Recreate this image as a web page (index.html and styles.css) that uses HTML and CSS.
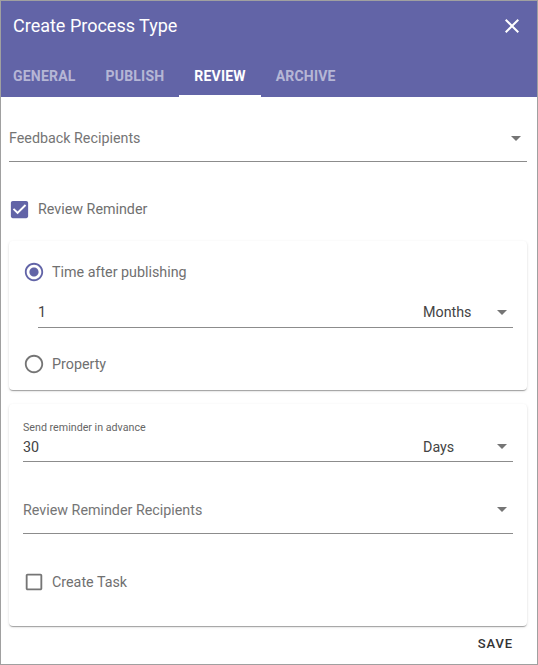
FILE: index.html
```html
<!DOCTYPE html>
<html>
<head>
<meta charset="utf-8">
<link rel="stylesheet" href="styles.css">
</head>
<body>
<div class="dialog">
  <header class="header">
    <div class="title-row">
      <h1 class="title">Create Process Type</h1>
      <svg class="close" viewBox="0 0 24 24" width="24" height="24"><path d="M19 6.41L17.59 5 12 10.59 6.41 5 5 6.41 10.59 12 5 17.59 6.41 19 12 13.41 17.59 19 19 17.59 13.41 12z" fill="#fff"/></svg>
    </div>
    <nav class="tabs">
      <div class="tab">General</div>
      <div class="tab">Publish</div>
      <div class="tab active">Review</div>
      <div class="tab">Archive</div>
    </nav>
  </header>
  <main class="content">
    <div class="select top-select">
      <span class="placeholder">Feedback Recipients</span>
      <svg class="arrow" viewBox="7 10 10 5" width="10" height="5"><path d="M7 10l5 5 5-5z" fill="#757575"/></svg>
    </div>

    <label class="check-row first-check">
      <svg class="icon icon-lg" viewBox="0 0 24 24"><path d="M19 3H5c-1.11 0-2 .9-2 2v14c0 1.1.89 2 2 2h14c1.11 0 2-.9 2-2V5c0-1.1-.89-2-2-2zm-9 14l-5-5 1.41-1.41L10 14.17l7.59-7.59L19 8l-9 9z" fill="#6264a7"/></svg>
      <span class="label-text">Review Reminder</span>
    </label>

    <section class="card card-one">
      <div class="check-row">
        <svg class="icon" viewBox="0 0 24 24"><path d="M12 7c-2.76 0-5 2.24-5 5s2.24 5 5 5 5-2.24 5-5-2.24-5-5-5zm0-5C6.48 2 2 6.48 2 12s4.48 10 10 10 10-4.48 10-10S17.52 2 12 2zm0 18c-4.42 0-8-3.58-8-8s3.58-8 8-8 8 3.58 8 8-3.58 8-8 8z" fill="#6264a7"/></svg>
        <span class="label-text">Time after publishing</span>
      </div>
      <div class="field-row duration">
        <span class="value grow">1</span>
        <span class="unit">
          <span class="value">Months</span>
          <svg class="arrow" viewBox="7 10 10 5" width="10" height="5"><path d="M7 10l5 5 5-5z" fill="#757575"/></svg>
        </span>
      </div>
      <div class="check-row property">
        <svg class="icon" viewBox="0 0 24 24"><path d="M12 2C6.48 2 2 6.48 2 12s4.48 10 10 10 10-4.48 10-10S17.52 2 12 2zm0 18c-4.42 0-8-3.58-8-8s3.58-8 8-8 8 3.58 8 8-3.58 8-8 8z" fill="#757575"/></svg>
        <span class="label-text">Property</span>
      </div>
    </section>

    <section class="card card-two">
      <div class="small-label">Send reminder in advance</div>
      <div class="field-row advance">
        <span class="value grow">30</span>
        <span class="unit">
          <span class="value">Days</span>
          <svg class="arrow" viewBox="7 10 10 5" width="10" height="5"><path d="M7 10l5 5 5-5z" fill="#757575"/></svg>
        </span>
      </div>
      <div class="select inner-select">
        <span class="placeholder">Review Reminder Recipients</span>
        <svg class="arrow" viewBox="7 10 10 5" width="10" height="5"><path d="M7 10l5 5 5-5z" fill="#757575"/></svg>
      </div>
      <label class="check-row task">
        <svg class="icon" viewBox="0 0 24 24"><path d="M19 5v14H5V5h14m0-2H5c-1.1 0-2 .9-2 2v14c0 1.1.9 2 2 2h14c1.1 0 2-.9 2-2V5c0-1.1-.9-2-2-2z" fill="#757575"/></svg>
        <span class="label-text">Create Task</span>
      </label>
    </section>

    <footer class="actions">
      <button class="save">Save</button>
    </footer>
  </main>
</div>
</body>
</html>
```

FILE: styles.css
```css
* { box-sizing: border-box; }
html, body { margin: 0; padding: 0; background: #fff; }
body { font-family: Roboto, "Liberation Sans", sans-serif; }

.dialog {
  width: 538px;
  height: 665px;
  border: 1px solid #a0a0a0;
  display: flex;
  flex-direction: column;
  overflow: hidden;
  background: #fff;
}

.header { background: #6264a7; color: #fff; }
.title-row {
  height: 48px;
  display: flex;
  align-items: center;
  justify-content: space-between;
  padding: 0 13px 0 12px;
}
.title { margin: 0; font-size: 18px; font-weight: 400; }
.close { display: block; margin-top: 1px; }

.tabs {
  display: flex;
  height: 48px;
  margin-left: -3px;
}
.tab {
  padding: 7px 15px 0;
  display: flex;
  align-items: center;
  font-size: 14px;
  font-weight: 700;
  letter-spacing: 0.2px;
  text-transform: uppercase;
  color: rgba(255,255,255,0.55);
  border-bottom: 2px solid transparent;
}
.tab.active { color: #fff; border-bottom-color: #fff; }

.content {
  flex: 1;
  padding: 0 10px 0 8px;
  display: flex;
  flex-direction: column;
}

.select {
  display: flex;
  align-items: center;
  justify-content: space-between;
  border-bottom: 1px solid rgba(0,0,0,0.45);
}
.top-select { margin-top: 18px; height: 47px; }
.placeholder { font-size: 14.3px; color: #757575; }
.arrow { display: block; margin-right: 6px; }

.check-row {
  display: flex;
  align-items: center;
  height: 24px;
  gap: 7px;
}
.icon { width: 22px; height: 22px; display: block; }
.icon-lg { width: 23px; height: 23px; }
.first-check { margin-top: 35px; margin-left: -1px; }
.label-text { font-size: 14.3px; color: #707070; }

.card {
  background: #fff;
  border-radius: 4px;
  box-shadow: 0 2px 1px -1px rgba(0,0,0,0.2), 0 1px 1px 0 rgba(0,0,0,0.14), 0 1px 3px 0 rgba(0,0,0,0.12);
  padding: 0 14px;
}
.card-one { margin-top: 20px; padding-top: 19px; padding-bottom: 14px; }
.card-two { margin-top: 14px; padding-top: 17px; padding-bottom: 32px; }

.field-row {
  display: flex;
  align-items: center;
  border-bottom: 1px solid rgba(0,0,0,0.45);
}
.duration { margin: 13px 0 0 15px; height: 31px; }
.advance { height: 27px; padding-bottom: 5px; padding-top: 2px; }
.grow { flex: 1; }
.value { font-size: 14.3px; color: #444; }
.unit {
  width: 90px;
  display: flex;
  align-items: center;
  justify-content: space-between;
}
.property { margin-top: 24px; }

.small-label { font-size: 10.7px; line-height: 14px; color: #666; }

.inner-select { margin-top: 24px; height: 48px; }
.task { margin-top: 36px; }

.actions {
  height: 34px;
  display: flex;
  align-items: center;
  justify-content: flex-end;
}
.save {
  border: 0;
  background: none;
  padding: 0;
  margin-right: 14px;
  font-family: inherit;
  font-size: 13px;
  font-weight: 500;
  letter-spacing: 0.9px;
  text-transform: uppercase;
  color: #333;
}
```
